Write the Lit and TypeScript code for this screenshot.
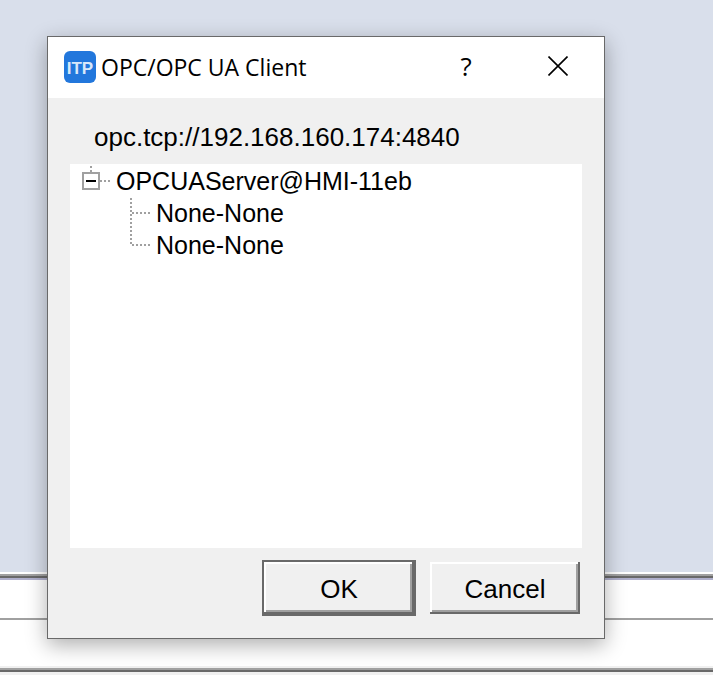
import { LitElement, html, css } from "lit";
import { customElement, property } from "lit/decorators.js";

@customElement("app-backdrop")
export class AppBackdrop extends LitElement {
  static styles = css`
    :host { display: flex; flex-direction: column; }
    .canvas { flex: 1; background: #d9dfeb; }
    .pane { box-sizing: border-box; background: #fff; }
    .edge { height: 2px; background: #fff; }
    .mid { background: #a0a0a0; }
    .dark { background: #696969; }
    .tint { background: #b0b0cc; }
    .face { background: #f0f0f0; }
    .upper { height: 38px; }
    .lower { height: 46px; }
    .foot { height: 3px; }
  `;
  render() {
    return html`
      <div class="canvas"></div>
      <div class="edge"></div>
      <div class="edge mid"></div>
      <div class="edge dark"></div>
      <div class="edge tint"></div>
      <div class="pane upper"></div>
      <div class="edge mid"></div>
      <div class="pane lower"></div>
      <div class="edge face"></div>
      <div class="edge mid"></div>
      <div class="edge dark"></div>
      <div class="edge face foot"></div>
    `;
  }
}

@customElement("server-tree")
export class ServerTree extends LitElement {
  @property() server = "";
  @property({ type: Array }) endpoints: string[] = [];

  static styles = css`
    :host {
      display: block;
      box-sizing: border-box;
      min-height: 384px;
      padding: 1px 12px;
      background: #fff;
      font-size: 25px;
      line-height: 32px;
      white-space: nowrap;
    }
    ul { list-style: none; margin: 0; padding: 0; }
    .row { display: flex; height: 32px; }
    .lines { flex: none; display: block; }
    .children { padding-left: 46px; }
    .label { padding-left: 4px; }
  `;

  render() {
    const last = this.endpoints.length - 1;
    return html`
      <ul role="tree" aria-label="Servers">
        <li role="treeitem" aria-expanded="true">
          <div class="row">
            <svg class="lines" width="30" height="32" shape-rendering="crispEdges" fill="none" stroke="#a0a0a0" stroke-width="2">
              <path d="M9 1v6M18 16h10" stroke-dasharray="2 2" />
              <rect x="1" y="8" width="16" height="16" />
              <path d="M4 16h10" stroke="#000" />
            </svg>
            <span class="label">${this.server}</span>
          </div>
          <ul role="group" class="children">
            ${this.endpoints.map(
              (name, i) => html`
                <li role="treeitem" class="row">
                  <svg class="lines" width="24" height="32" shape-rendering="crispEdges" fill="none" stroke="#a0a0a0" stroke-width="2" stroke-dasharray="2 2">
                    <path d=${i === last ? "M3 1v16M4 16h18" : "M3 1v32M4 16h18"} />
                  </svg>
                  <span class="label">${name}</span>
                </li>
              `
            )}
          </ul>
        </li>
      </ul>
    `;
  }
}

@customElement("app-root")
export class AppRoot extends LitElement {
  static styles = css`
    :host {
      display: block;
      position: relative;
      box-sizing: border-box;
      min-height: 100vh;
      padding: 36px 108px 36px 47px;
      color: #000;
      font-family: "Liberation Sans", Arial, sans-serif;
    }
    app-backdrop { position: absolute; inset: 0; }
    .dialog {
      position: relative;
      border: 1px solid #696969;
      background: #f0f0f0;
      box-shadow: 0 6px 20px rgba(0, 0, 0, 0.32);
    }
    .titlebar {
      display: flex;
      align-items: center;
      box-sizing: border-box;
      height: 61px;
      padding: 0 0 2px 16px;
      background: #fff;
    }
    .logo { flex: none; }
    .logo-text {
      font: bold 17px "Liberation Sans", Arial, sans-serif;
      fill: #d9e8fa;
    }
    h1 {
      flex: 1;
      margin: 0;
      padding-left: 5px;
      font: 23px/32px "Open Sans", "Noto Sans", sans-serif;
      white-space: nowrap;
    }
    button { padding: 0; color: inherit; font-family: inherit; }
    .caption {
      display: flex;
      align-items: center;
      justify-content: center;
      width: 92px;
      height: 56px;
      padding-bottom: 2px;
      border: 0;
      background: none;
      font: 26px/32px "Open Sans", "Noto Sans", sans-serif;
    }
    .body { padding: 23px 22px 22px; }
    .address {
      margin: 0;
      padding: 0 24px 11px;
      font-size: 26px;
      line-height: 32px;
    }
    .actions {
      display: flex;
      justify-content: flex-end;
      align-items: center;
      gap: 14px;
      padding: 12px 2px 0;
    }
    .push {
      box-sizing: border-box;
      width: 150px;
      height: 52px;
      padding-top: 2px;
      border: 0;
      background: #f0f0f0;
      box-shadow: inset -2px -2px #696969, inset 2px 2px #fff, inset -4px -4px #a0a0a0;
      font-size: 26px;
      line-height: 32px;
    }
    .default {
      width: 154px;
      height: 56px;
      border: 2px solid #696969;
    }
  `;

  render() {
    return html`
      <app-backdrop></app-backdrop>
      <section class="dialog" role="dialog" aria-labelledby="title">
        <header class="titlebar">
          <svg class="logo" width="32" height="32" viewBox="0 0 32 32" aria-hidden="true">
            <rect width="32" height="32" rx="6" fill="#2277dc" />
            <text class="logo-text" x="16" y="23" text-anchor="middle">ITP</text>
          </svg>
          <h1 id="title">OPC/OPC UA Client</h1>
          <button class="caption" type="button" aria-label="Help">?</button>
          <button class="caption" type="button" aria-label="Close">
            <svg width="20" height="20" viewBox="0 0 20 20" fill="none" stroke="#000" stroke-width="1.6">
              <path d="M0.5 0.5L19.5 19.5M19.5 0.5L0.5 19.5" />
            </svg>
          </button>
        </header>
        <div class="body">
          <p class="address">opc.tcp://192.168.160.174:4840</p>
          <server-tree server="OPCUAServer@HMI-11eb" .endpoints=${["None-None", "None-None"]}></server-tree>
          <div class="actions">
            <button class="push default" type="button">OK</button>
            <button class="push" type="button">Cancel</button>
          </div>
        </div>
      </section>
    `;
  }
}
